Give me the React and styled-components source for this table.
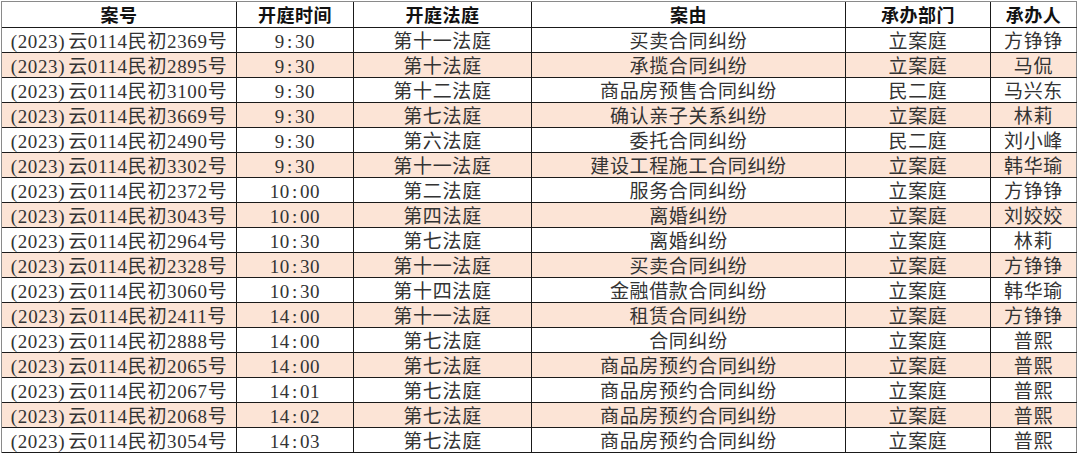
import React from "react";
import styled, { createGlobalStyle } from "styled-components";

const Global = createGlobalStyle`
  html, body { margin: 0; padding: 0; background: #fff; }
  body { font-family: "Liberation Serif", "Noto Sans CJK SC", serif; }
`;

const COLS = "235px 117px 178px 314px 145px 86px";

const Sheet = styled.div`
  margin: 1px 0 0 1px;
  width: 1076px;
  box-sizing: border-box;
  border-top: 1px solid #8a8a8a;
  border-left: 1px solid #8a8a8a;
`;

const Row = styled.div`
  display: grid;
  grid-template-columns: ${COLS};
  height: ${(p) => (p.$head ? 26 : 25)}px;
  box-sizing: border-box;
  border-bottom: 1px solid #1a1a1a;
  background: ${(p) => (p.$pink ? "#fce4d6" : "#fff")};
`;

const Cell = styled.div`
  box-sizing: border-box;
  border-right: 1px solid ${(p) => (p.$last ? "#8a8a8a" : "#1a1a1a")};
  display: flex;
  align-items: center;
  justify-content: center;
  white-space: nowrap;
  overflow: hidden;
  font-size: ${(p) => (p.$head ? 18 : 19)}px;
  line-height: 1;
  font-weight: ${(p) => (p.$head ? 700 : 400)};
  color: ${(p) => (p.$head ? "#111" : "#333")};
  padding-top: 2px;
  letter-spacing: ${(p) => (p.$head ? "0.5px" : "0.65px")};
`;

const Colon = styled.span`
  margin: 0 2px;
`;

const Paren = styled.span`
  margin-right: 3px;
`;

const header = ["案号", "开庭时间", "开庭法庭", "案由", "承办部门", "承办人"];

const rows = [
  ["(2023)云0114民初2369号", "9:30", "第十一法庭", "买卖合同纠纷", "立案庭", "方铮铮"],
  ["(2023)云0114民初2895号", "9:30", "第十法庭", "承揽合同纠纷", "立案庭", "马侃"],
  ["(2023)云0114民初3100号", "9:30", "第十二法庭", "商品房预售合同纠纷", "民二庭", "马兴东"],
  ["(2023)云0114民初3669号", "9:30", "第七法庭", "确认亲子关系纠纷", "立案庭", "林莉"],
  ["(2023)云0114民初2490号", "9:30", "第六法庭", "委托合同纠纷", "民二庭", "刘小峰"],
  ["(2023)云0114民初3302号", "9:30", "第十一法庭", "建设工程施工合同纠纷", "立案庭", "韩华瑜"],
  ["(2023)云0114民初2372号", "10:00", "第二法庭", "服务合同纠纷", "立案庭", "方铮铮"],
  ["(2023)云0114民初3043号", "10:00", "第四法庭", "离婚纠纷", "立案庭", "刘姣姣"],
  ["(2023)云0114民初2964号", "10:30", "第七法庭", "离婚纠纷", "立案庭", "林莉"],
  ["(2023)云0114民初2328号", "10:30", "第十一法庭", "买卖合同纠纷", "立案庭", "方铮铮"],
  ["(2023)云0114民初3060号", "10:30", "第十四法庭", "金融借款合同纠纷", "立案庭", "韩华瑜"],
  ["(2023)云0114民初2411号", "14:00", "第十一法庭", "租赁合同纠纷", "立案庭", "方铮铮"],
  ["(2023)云0114民初2888号", "14:00", "第七法庭", "合同纠纷", "立案庭", "普熙"],
  ["(2023)云0114民初2065号", "14:00", "第七法庭", "商品房预约合同纠纷", "立案庭", "普熙"],
  ["(2023)云0114民初2067号", "14:01", "第七法庭", "商品房预约合同纠纷", "立案庭", "普熙"],
  ["(2023)云0114民初2068号", "14:02", "第七法庭", "商品房预约合同纠纷", "立案庭", "普熙"],
  ["(2023)云0114民初3054号", "14:03", "第七法庭", "商品房预约合同纠纷", "立案庭", "普熙"],
];

function CaseNo({ text }) {
  const i = text.indexOf(")") + 1;
  return (
    <>
      <Paren>{text.slice(0, i)}</Paren>
      {text.slice(i)}
    </>
  );
}

function Time({ text }) {
  const [h, m] = text.split(":");
  return (
    <>
      {h}
      <Colon>:</Colon>
      {m}
    </>
  );
}

export default function App() {
  return (
    <>
      <Global />
      <Sheet>
        <Row $head>
          {header.map((h, i) => (
            <Cell key={i} $head $last={i === header.length - 1}>
              {h}
            </Cell>
          ))}
        </Row>
        {rows.map((r, ri) => (
          <Row key={ri} $pink={ri % 2 === 1}>
            <Cell>
              <CaseNo text={r[0]} />
            </Cell>
            <Cell>
              <Time text={r[1]} />
            </Cell>
            <Cell>{r[2]}</Cell>
            <Cell>{r[3]}</Cell>
            <Cell>{r[4]}</Cell>
            <Cell $last>{r[5]}</Cell>
          </Row>
        ))}
      </Sheet>
    </>
  );
}
